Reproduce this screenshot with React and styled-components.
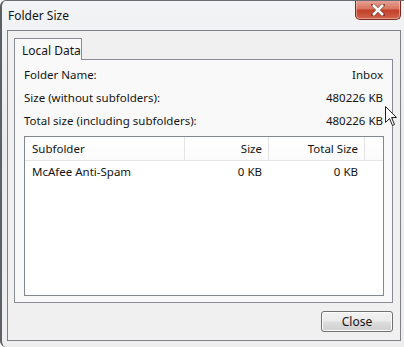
import React from "react";
import styled, { createGlobalStyle } from "styled-components";

const Global = createGlobalStyle`
  html, body { margin: 0; padding: 0; background: #ffffff; }
  body { font-family: "Noto Sans", "Segoe UI", sans-serif; font-size: 11.5px; color: #141414; }
  * { box-sizing: border-box; }
`;

const Frame = styled.div`
  position: relative;
  width: 404px;
  height: 347px;
  display: flex;
  flex-direction: column;
  background: linear-gradient(180deg, #f3f4f6 0%, #e9eaec 40%, #eeeeef 100%);
  border-left: 2px solid #5c5f63;
  border-top: 1px solid #6a6d71;
  border-top-left-radius: 6px;
  border-bottom-left-radius: 6px;
  overflow: hidden;
`;

const TitleBar = styled.div`
  height: 29px;
  display: flex;
  align-items: flex-start;
  justify-content: space-between;
  padding-left: 6px;
`;

const Title = styled.div`
  margin-top: 6px;
  font-size: 12px;
  color: #111;
`;

const CloseX = styled.div`
  width: 46px;
  height: 20px;
  margin-top: -1px;
  margin-right: 3px;
  display: flex;
  align-items: center;
  justify-content: center;
  border: 1px solid #7b2a22;
  border-top: none;
  border-radius: 0 0 5px 5px;
  background: linear-gradient(180deg, #e7a79c 0%, #d9755f 45%, #c2412a 55%, #d0654d 100%);
  box-shadow: inset 0 0 0 1px rgba(255, 210, 200, 0.5);
`;

const Client = styled.div`
  flex: 1;
  margin: 0 3px 6px 5px;
  border: 1px solid #7f8186;
  background: #f0f0f0;
  padding: 7px 7px 7px 6px;
  display: flex;
  flex-direction: column;
`;

const TabStrip = styled.div`
  display: flex;
  height: 21px;
  position: relative;
  z-index: 1;
`;

const Tab = styled.div`
  width: 68px;
  height: 22px;
  border: 1px solid #898c95;
  border-bottom: none;
  background: #f9f9f9;
  padding: 3px 0 0 7px;
  font-size: 12px;
`;

const Panel = styled.div`
  height: 244px;
  border: 1px solid #898c95;
  background: #f9f9f9;
  padding: 3px 8px 6px 9px;
  display: flex;
  flex-direction: column;
`;

const InfoRow = styled.div`
  height: 23px;
  display: flex;
  align-items: center;
  justify-content: space-between;
  padding-right: 1px;
`;

const ListView = styled.div`
  margin-top: 4px;
  flex: 1;
  border: 1px solid #828790;
  background: #ffffff;
  display: flex;
  flex-direction: column;
`;

const HeaderRow = styled.div`
  height: 24px;
  display: grid;
  grid-template-columns: 160px 84px 96px 1fr;
  border-bottom: 1px solid #e5e5e5;
  background: linear-gradient(180deg, #ffffff 0%, #fbfbfb 100%);
`;

const HeaderCell = styled.div`
  display: flex;
  align-items: center;
  justify-content: ${(p) => (p.$right ? "flex-end" : "flex-start")};
  padding: 0 ${(p) => (p.$right ? "6px" : "0")} 0 ${(p) => (p.$right ? "0" : "7px")};
  border-right: ${(p) => (p.$last ? "none" : "1px solid #e3e4e6")};
`;

const DataRow = styled.div`
  height: 21px;
  display: grid;
  grid-template-columns: 160px 84px 96px 1fr;
`;

const Cell = styled.div`
  display: flex;
  align-items: center;
  justify-content: ${(p) => (p.$right ? "flex-end" : "flex-start")};
  padding: 0 ${(p) => (p.$right ? "7px" : "0")} 0 ${(p) => (p.$right ? "0" : "7px")};
`;

const Footer = styled.div`
  display: flex;
  justify-content: flex-end;
  padding-top: 8px;
`;

const Button = styled.div`
  width: 72px;
  height: 21px;
  border: 1px solid #707070;
  border-radius: 3px;
  background: linear-gradient(180deg, #f2f2f2 0%, #ebebeb 48%, #dddddd 52%, #cfcfcf 100%);
  box-shadow: inset 0 0 0 1px #fcfcfc;
  display: flex;
  align-items: center;
  justify-content: center;
  font-size: 12px;
`;

const Cursor = styled.svg`
  position: absolute;
  left: 383px;
  top: 105px;
`;

export default function App() {
  return (
    <>
      <Global />
      <Frame>
        <TitleBar>
          <Title>Folder Size</Title>
          <CloseX>
            <svg width="14" height="12" viewBox="0 0 14 12">
              <path
                d="M2 1 L12 11 M12 1 L2 11"
                stroke="#5a1d14"
                strokeWidth="4"
                strokeLinecap="square"
                opacity="0.6"
              />
              <path d="M2 1 L12 11 M12 1 L2 11" stroke="#ffffff" strokeWidth="2.6" />
            </svg>
          </CloseX>
        </TitleBar>
        <Client>
          <TabStrip>
            <Tab>Local Data</Tab>
          </TabStrip>
          <Panel>
            <InfoRow>
              <span>Folder Name:</span>
              <span>Inbox</span>
            </InfoRow>
            <InfoRow>
              <span>Size (without subfolders):</span>
              <span>480226 KB</span>
            </InfoRow>
            <InfoRow>
              <span>Total size (including subfolders):</span>
              <span>480226 KB</span>
            </InfoRow>
            <ListView>
              <HeaderRow>
                <HeaderCell>Subfolder</HeaderCell>
                <HeaderCell $right>Size</HeaderCell>
                <HeaderCell $right>Total Size</HeaderCell>
                <HeaderCell $last />
              </HeaderRow>
              <DataRow>
                <Cell>McAfee Anti-Spam</Cell>
                <Cell $right>0 KB</Cell>
                <Cell $right>0 KB</Cell>
                <Cell />
              </DataRow>
            </ListView>
          </Panel>
          <Footer>
            <Button>Close</Button>
          </Footer>
        </Client>
        <Cursor width="13" height="21" viewBox="0 0 13 21">
          <path
            d="M0.5 0.5 L0.5 16.5 L4.5 12.5 L7.5 19.5 L9.5 18.5 L6.5 11.5 L11.5 11.5 Z"
            fill="#ffffff"
            stroke="#222"
            strokeWidth="1"
            strokeLinejoin="round"
          />
        </Cursor>
      </Frame>
    </>
  );
}
